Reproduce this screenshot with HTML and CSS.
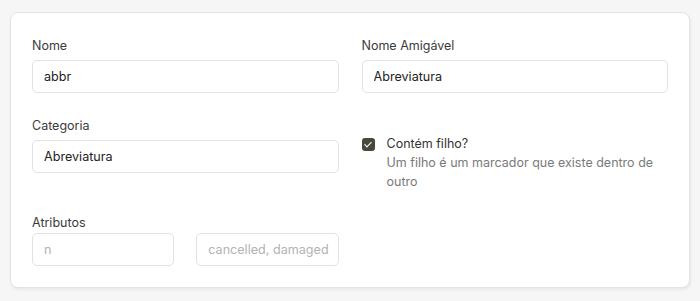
FILE: index.html
```html
<!DOCTYPE html>
<html lang="pt">
<head>
    <meta charset="UTF-8">
    <meta name="viewport" content="width=device-width, initial-scale=1.0">
    <title>Marcador</title>
    <link rel="stylesheet" href="styles.css">
</head>
<body>
    <form class="card">
        <div class="form-group">
            <label for="nome">Nome</label>
            <input type="text" id="nome" name="nome" value="abbr">
        </div>

        <div class="form-group">
            <label for="nome_amigavel">Nome Amigável</label>
            <input type="text" id="nome_amigavel" name="nome_amigavel" value="Abreviatura">
        </div>

        <div class="form-group">
            <label for="categoria">Categoria</label>
            <input type="text" id="categoria" name="categoria" value="Abreviatura">
        </div>

        <div class="form-group check-group">
            <input type="checkbox" id="contem_filho" name="contem_filho" class="check" checked>
            <div class="check-text">
                <label for="contem_filho">Contém filho?</label>
                <p class="hint">Um filho é um marcador que existe dentro de outro</p>
            </div>
        </div>

        <div class="form-group attr-group">
            <label for="atributo_nome">Atributos</label>
            <div class="attr-row">
                <input type="text" id="atributo_nome" name="atributo_nome" placeholder="n">
                <input type="text" id="atributo_valores" name="atributo_valores" placeholder="cancelled, damaged">
            </div>
        </div>
    </form>
</body>
</html>
```

FILE: styles.css
```css
body {
    font-family: Inter, "Noto Sans", sans-serif;
    font-size: 12.5px;
    background-color: #f6f6f6;
    margin: 0;
    padding: 12px 10px 13px;
}
.card {
    display: grid;
    grid-template-columns: 1fr 1fr;
    column-gap: 23px;
    background-color: #fff;
    border: 1px solid #e3e3e3;
    border-radius: 8px;
    box-shadow: 1px 2px 3px rgba(0, 0, 0, 0.06);
    padding: 24px 21px 21px;
}
.form-group {
    margin-bottom: 24px;
}
label {
    display: block;
    margin-bottom: 5px;
    color: #3b3b3b;
    line-height: 18px;
}
input[type="text"] {
    width: 100%;
    height: 33px;
    padding: 0 5px 0 11px;
    box-sizing: border-box;
    border: 1px solid #e2e2e2;
    border-radius: 5px;
    font-family: inherit;
    font-size: 12.6px;
    color: #222;
    outline: none;
}
input::placeholder {
    color: #b3b3b3;
}
.check-group {
    display: flex;
    align-items: flex-start;
    gap: 12px;
    padding-top: 18px;
    margin-bottom: 23px;
}
.check {
    appearance: none;
    flex-shrink: 0;
    width: 13px;
    height: 13px;
    margin: 3px 0 0;
    border-radius: 3px;
    background-color: #4b4740;
    position: relative;
}
.check:checked::after {
    content: "";
    position: absolute;
    left: 4px;
    top: 2px;
    width: 3px;
    height: 6px;
    border: solid #fff;
    border-width: 0 1.5px 1.5px 0;
    transform: rotate(45deg);
}
.check-text label {
    margin-bottom: 0;
    color: #333;
}
.hint {
    margin: 0;
    color: #7a7a7a;
    line-height: 19px;
}
.attr-group {
    margin-bottom: 0;
}
.attr-group label {
    margin-bottom: 1px;
}
.attr-row {
    display: flex;
    gap: 22px;
}
```
